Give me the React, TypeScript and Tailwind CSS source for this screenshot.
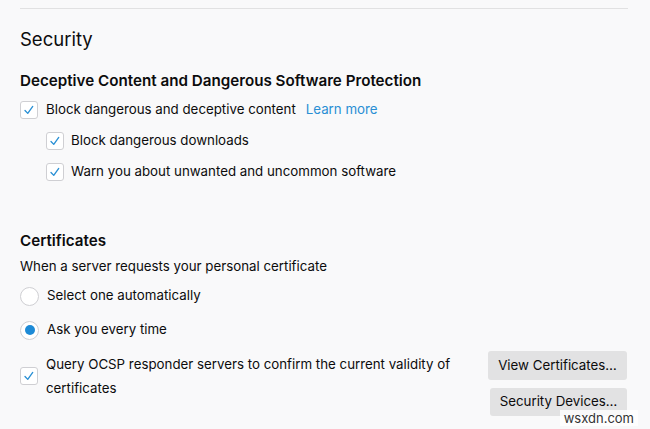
import React from 'react';

const Check = () => (
  <svg viewBox="0 0 18 18" className="w-[18px] h-[18px]">
    <path d="M4.5 9.5 L7.6 12.8 L13.2 5" fill="none" stroke="#2a90d5" strokeWidth="1.5" strokeLinecap="round" strokeLinejoin="round" />
  </svg>
);

const Checkbox = () => (
  <div className="w-[18px] h-[18px] shrink-0 rounded-[3px] border border-[#cfcfd3] bg-white flex items-center justify-center">
    <Check />
  </div>
);

const Radio = ({ on }: { on?: boolean }) => (
  <div className="w-[19px] h-[19px] shrink-0 rounded-full border border-[#cfcfd3] bg-white flex items-center justify-center">
    {on && <div className="w-[10px] h-[10px] rounded-full bg-[#1d8ad6]" />}
  </div>
);

const App = () => {
  return (
    <div
      className="relative w-[650px] h-[429px] overflow-hidden bg-[#f9f9fa] text-[#0c0c0d] px-5 pt-2 text-[13.3px]"
      style={{ fontFamily: 'Inter, "Noto Sans", sans-serif' }}
    >
      <div className="w-[608px] border-t border-[#e1e1e2]" />
      <h1 className="mt-[16px] text-[18.5px] leading-[28px]">Security</h1>

      <h2 className="mt-[18px] text-[15.2px] font-semibold leading-[20px]">Deceptive Content and Dangerous Software Protection</h2>
      <div className="mt-[9px] flex items-center gap-2 h-[20px]">
        <Checkbox />
        <span>Block dangerous and deceptive content</span>
        <span className="ml-[2px] text-[#2a8fd4]">Learn more</span>
      </div>
      <div className="ml-[26px] mt-[11px] flex items-center gap-[7px] h-[20px]">
        <Checkbox />
        <span>Block dangerous downloads</span>
      </div>
      <div className="ml-[26px] mt-[11px] flex items-center gap-[7px] h-[20px]">
        <Checkbox />
        <span>Warn you about unwanted and uncommon software</span>
      </div>

      <h2 className="mt-[49px] text-[15.2px] font-semibold leading-[20px]">Certificates</h2>
      <p className="mt-[5px] leading-[20px]">When a server requests your personal certificate</p>
      <div className="mt-[10px] flex items-center gap-2 h-[20px]">
        <Radio />
        <span>Select one automatically</span>
      </div>
      <div className="mt-[14px] flex items-center gap-2 h-[20px]">
        <Radio on />
        <span>Ask you every time</span>
      </div>

      <div className="mt-[10px] flex items-start">
        <div className="flex items-center gap-2 w-[440px] pt-[2px]">
          <Checkbox />
          <span className="w-[410px] leading-[24px]">Query OCSP responder servers to confirm the current validity of certificates</span>
        </div>
        <div className="ml-auto mr-[3px] flex flex-col items-end gap-[8px] mt-[1px]">
          <button className="h-[29px] w-[139px] rounded-[3px] bg-[#e2e2e3] text-[13.3px]">View Certificates…</button>
          <button className="h-[28px] w-[137px] rounded-[3px] bg-[#e2e2e3] text-[13.3px]">Security Devices…</button>
        </div>
      </div>

      <div className="absolute right-[12px] bottom-[3px] text-[13px] text-[#333] bg-white/80 px-1 leading-[16px]">wsxdn.com</div>
    </div>
  );
};

export default App;
